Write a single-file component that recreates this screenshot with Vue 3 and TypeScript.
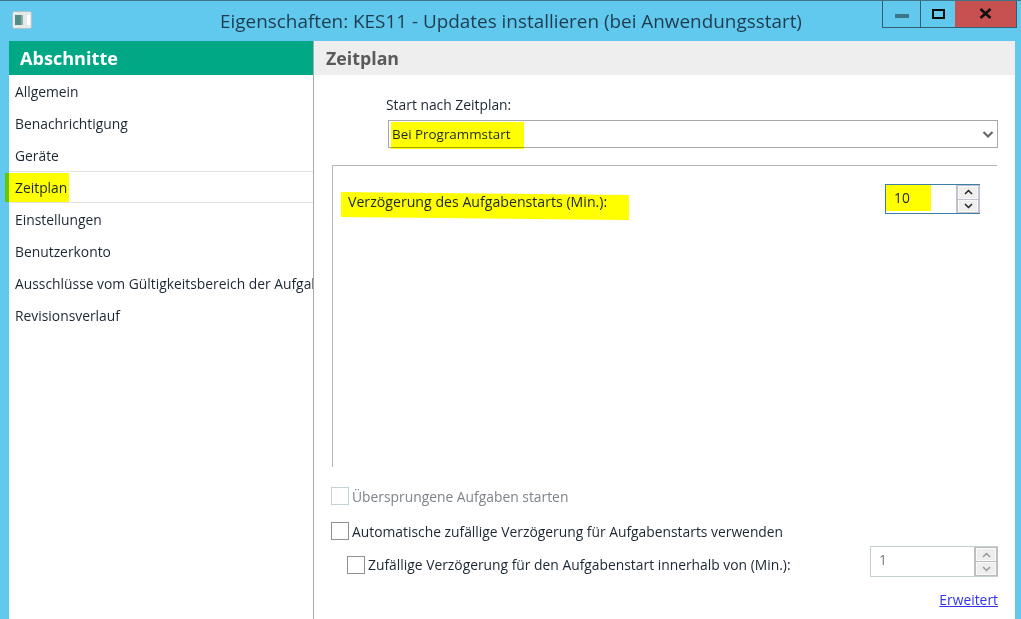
<script setup lang="ts">
const sections: string[] = [
  'Allgemein',
  'Benachrichtigung',
  'Geräte',
  'Zeitplan',
  'Einstellungen',
  'Benutzerkonto',
  'Ausschlüsse vom Gültigkeitsbereich der Aufgabe',
  'Revisionsverlauf',
]
const activeSection = 'Zeitplan'
</script>

<template>
  <div class="window">
    <header class="titlebar">
      <svg class="app-icon" width="20" height="18" viewBox="0 0 20 18">
        <rect x="0.5" y="0.5" width="19" height="17" rx="2" fill="#e4e9ea" stroke="#a9c6d2" />
        <rect x="3" y="4" width="6" height="10" fill="#4f8d80" />
        <rect x="9" y="4" width="2" height="10" fill="#8fa9a8" />
        <rect x="15" y="4" width="3" height="10" fill="#ffffff" />
      </svg>
      <div class="title">Eigenschaften: KES11 - Updates installieren (bei Anwendungsstart)</div>
      <div class="controls">
        <div class="ctl ctl-min"><span class="min-glyph"></span></div>
        <div class="ctl ctl-max"><span class="max-glyph"></span></div>
        <div class="ctl ctl-close">
          <svg width="13" height="11" viewBox="0 0 13 11">
            <path d="M1.5 1 L11.5 10 M11.5 1 L1.5 10" stroke="#111" stroke-width="2.6" fill="none" />
          </svg>
        </div>
      </div>
    </header>

    <div class="body">
      <aside class="sidebar">
        <div class="side-head">Abschnitte</div>
        <ul class="side-list">
          <li
            v-for="s in sections"
            :key="s"
            class="side-item"
            :class="{ active: s === activeSection }"
          >
            <span v-if="s === activeSection" class="hl hl-nav"></span>
            <span class="txt">{{ s }}</span>
          </li>
        </ul>
      </aside>

      <main class="panel">
        <div class="panel-head">Zeitplan</div>
        <div class="panel-body">
          <div class="start-block">
            <label class="start-label">Start nach Zeitplan:</label>
            <div class="select">
              <span class="hl hl-select"></span>
              <span class="txt">Bei Programmstart</span>
              <svg class="chev" width="12" height="9" viewBox="0 0 12 9">
                <path d="M1.5 2 L6 6.5 L10.5 2" stroke="#666" stroke-width="2.2" fill="none" />
              </svg>
            </div>
          </div>

          <section class="group">
            <div class="delay-row">
              <div class="delay-label">
                <span class="hl hl-delay"></span>
                <span class="txt">Verzögerung des Aufgabenstarts (Min.):</span>
              </div>
              <div class="spin spin-active">
                <div class="spin-input">
                  <span class="hl hl-ten"></span>
                  <span class="txt">10</span>
                </div>
                <div class="spin-btns">
                  <div class="spin-btn">
                    <svg width="9" height="6" viewBox="0 0 9 6"><path d="M1 5 L4.5 1.5 L8 5" stroke="#222" stroke-width="1.5" fill="none" /></svg>
                  </div>
                  <div class="spin-btn">
                    <svg width="9" height="6" viewBox="0 0 9 6"><path d="M1 1 L4.5 4.5 L8 1" stroke="#222" stroke-width="1.5" fill="none" /></svg>
                  </div>
                </div>
              </div>
            </div>
          </section>

          <div class="options">
            <div class="check-row disabled">
              <span class="box"></span>
              <span>Übersprungene Aufgaben starten</span>
            </div>
            <div class="check-row second">
              <span class="box"></span>
              <span>Automatische zufällige Verzögerung für Aufgabenstarts verwenden</span>
            </div>
            <div class="third">
              <div class="check-row nested">
                <span class="box"></span>
                <span>Zufällige Verzögerung für den Aufgabenstart innerhalb von (Min.):</span>
              </div>
              <div class="spin spin-off">
                <div class="spin-input">1</div>
                <div class="spin-btns">
                  <div class="spin-btn">
                    <svg width="9" height="6" viewBox="0 0 9 6"><path d="M1 5 L4.5 1.5 L8 5" stroke="#999" stroke-width="1.5" fill="none" /></svg>
                  </div>
                  <div class="spin-btn">
                    <svg width="9" height="6" viewBox="0 0 9 6"><path d="M1 1 L4.5 4.5 L8 1" stroke="#999" stroke-width="1.5" fill="none" /></svg>
                  </div>
                </div>
              </div>
            </div>
            <div class="link-row"><a class="link">Erweitert</a></div>
          </div>
        </div>
      </main>
    </div>
  </div>
</template>

<style>
html, body { margin: 0; padding: 0; background: #62c9ee; }
</style>

<style scoped>
.window {
  width: 1021px;
  height: 619px;
  box-sizing: border-box;
  display: flex;
  flex-direction: column;
  overflow: hidden;
  background: #62c9ee;
  border-top: 1px solid #3f7386;
  font-family: "Open Sans", "Noto Sans", sans-serif;
  font-size: 13.85px;
  color: #1c2733;
}
.titlebar {
  height: 40px;
  flex: none;
  position: relative;
  display: flex;
  align-items: flex-start;
  padding-left: 12px;
}
.app-icon { margin-top: 10px; }
.title {
  position: absolute;
  left: 0;
  right: 0;
  top: 9px;
  text-align: center;
  font-size: 18.9px;
  line-height: 22px;
  color: #1e3c4e;
  padding-left: 1px;
}
.controls {
  position: absolute;
  top: -1px;
  right: 4px;
  display: flex;
  height: 28px;
  box-sizing: border-box;
  border: 1px solid #33606f;
  border-top: 0;
}
.ctl { display: flex; align-items: center; justify-content: center; }
.ctl-min { width: 37px; border-right: 1px solid #33606f; }
.ctl-max { width: 34px; }
.ctl-close { width: 61px; background: #c75050; }
.min-glyph { width: 14px; height: 4px; background: #3c7388; margin-top: 5px; }
.max-glyph { width: 9px; height: 6px; border: 2.5px solid #0a0a0a; }

.body {
  flex: 1;
  min-height: 0;
  display: flex;
  margin-left: 9px;
  margin-right: 6px;
}
.sidebar {
  width: 304px;
  flex: none;
  background: #fff;
  display: flex;
  flex-direction: column;
}
.side-head {
  height: 34px;
  flex: none;
  box-sizing: border-box;
  background: #00a886;
  color: #fff;
  font-weight: 700;
  font-size: 18.1px;
  line-height: 34px;
  padding-left: 11px;
}
.side-list { list-style: none; margin: 0; padding: 0; }
.side-item {
  position: relative;
  height: 32px;
  box-sizing: border-box;
  padding-left: 6px;
  line-height: 33px;
  white-space: nowrap;
  overflow: hidden;
}
.side-item.active {
  border-top: 1px solid #e2e2e2;
  border-bottom: 1px solid #e2e2e2;
  line-height: 31px;
  overflow: visible;
}
.txt { position: relative; }

.hl { position: absolute; background: #ffff00; mix-blend-mode: multiply; }
.hl-nav { left: -4px; top: 1px; width: 64px; height: 29px; }
.hl-select { left: 2px; top: 1px; width: 133px; height: 27px; }
.hl-delay {
  left: -7px;
  top: -1px;
  width: 288px;
  height: 28px;
  clip-path: polygon(0 0, 100% 3px, 100% 100%, 0 25px);
}
.hl-ten { left: 0; top: 0; width: 45px; height: 26px; }

.panel {
  flex: 1;
  min-width: 0;
  display: flex;
  flex-direction: column;
  background: #fff;
  border-left: 1px solid #a9a9a9;
}
.panel-head {
  height: 34px;
  flex: none;
  background: #eeeeee;
  color: #5a5a5a;
  font-weight: 700;
  font-size: 17.8px;
  line-height: 34px;
  padding-left: 12px;
}
.panel-body {
  flex: 1;
  min-height: 0;
  display: flex;
  flex-direction: column;
  padding-left: 18px;
  padding-right: 17px;
}
.start-block {
  padding-top: 20px;
  padding-left: 55px;
}
.start-label { display: block; line-height: 20px; height: 25px; margin-left: -1px; }
.select {
  position: relative;
  height: 28px;
  box-sizing: border-box;
  border: 1.5px solid #a8a8a8;
  display: flex;
  align-items: center;
  padding-left: 3px;
  margin-left: 1px;
  font-size: 13.4px;
}
.chev { position: absolute; right: 3px; top: 9px; }

.group {
  margin-top: 17px;
  margin-right: 1px;
  height: 302px;
  flex: none;
  box-sizing: border-box;
  border-top: 1px solid #b5b5b5;
  border-left: 1px solid #b5b5b5;
}
.delay-row {
  display: flex;
  justify-content: space-between;
  align-items: center;
  padding: 18px 17px 0 15px;
}
.delay-label { position: relative; margin-top: 6px; line-height: 18px; font-size: 14.15px; }
.spin {
  display: flex;
  box-sizing: border-box;
}
.spin-active {
  width: 95px;
  height: 30px;
  border: 1px solid #3f7fa5;
  border-right: 0;
}
.spin-input {
  position: relative;
  flex: 1;
  display: flex;
  align-items: center;
  padding-left: 8px;
}
.spin-active .spin-input { padding-bottom: 3px; }
.spin-btns {
  width: 24px;
  flex: none;
  display: flex;
  flex-direction: column;
  gap: 1px;
  background: #c0c0cf;
  padding: 1px 2px;
  box-sizing: border-box;
}
.spin-btn {
  flex: 1;
  background: #eeeeee;
  border: 1px solid #fafafa;
  display: flex;
  align-items: center;
  justify-content: center;
}
.spin-off {
  width: 128px;
  height: 31px;
  border: 1px solid #c3cfd0;
  border-right: 0;
  color: #7a7a7a;
}
.spin-off .spin-input { padding-bottom: 4px; }
.spin-off .spin-btns { background: #bdbdbd; }

.options {
  padding-top: 19px;
  display: flex;
  flex-direction: column;
}
.check-row {
  display: flex;
  align-items: center;
  gap: 3px;
  height: 20px;
  white-space: nowrap;
  margin-left: -1px;
}
.second { margin-top: 15px; }
.box {
  width: 18px;
  height: 18px;
  flex: none;
  box-sizing: border-box;
  border: 1.5px solid #8f8f8f;
  background: #fff;
}
.disabled { color: #7d848a; }
.disabled .box { border-color: #c5d3d6; }
.third {
  display: flex;
  align-items: center;
  justify-content: space-between;
  margin-top: 5px;
  height: 31px;
}
.nested { margin-left: 15px; margin-top: 6px; }
.link-row {
  display: flex;
  justify-content: flex-end;
  margin-top: 14px;
}
.link {
  color: #3333ee;
  text-decoration: underline;
  line-height: 18px;
}
</style>
